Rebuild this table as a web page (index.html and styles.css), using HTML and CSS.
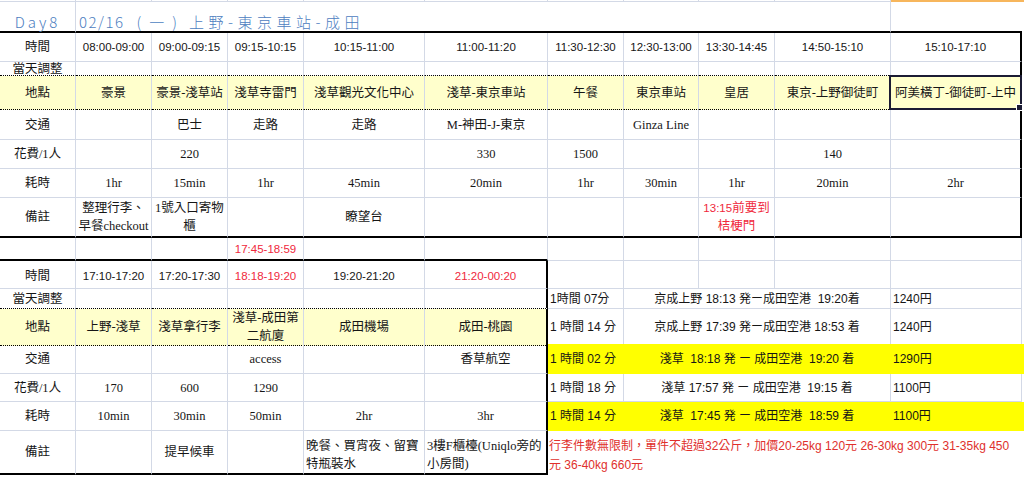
FILE: index.html
```html
<!DOCTYPE html>
<html lang="zh-Hant">
<head>
<meta charset="utf-8">
<title>Day8 行程</title>
<link rel="stylesheet" href="styles.css">
</head>
<body>
<div class="sheet">
  <div class="row r-top">
    <div class="c"></div><div class="c"></div><div class="c"></div><div class="c"></div><div class="c"></div><div class="c"></div><div class="c"></div><div class="c"></div><div class="c"></div><div class="c"></div><div class="c hdr"></div><div class="c hdr x"></div>
  </div>
  <div class="row r-title">
    <div class="c bt title">Day8</div>
    <div class="c bt title tl span9"><span class="t1">02/16</span><span class="t2">(一)</span><span class="t3">上野-東京車站-成田</span></div>
    <div class="c bt noright"></div>
    <div class="c x"></div>
  </div>
  <div class="row r-29">
    <div class="c">時間</div>
    <div class="c s">08:00-09:00</div>
    <div class="c s">09:00-09:15</div>
    <div class="c s">09:15-10:15</div>
    <div class="c s">10:15-11:00</div>
    <div class="c s">11:00-11:20</div>
    <div class="c s">11:30-12:30</div>
    <div class="c s">12:30-13:00</div>
    <div class="c s">13:30-14:45</div>
    <div class="c s">14:50-15:10</div>
    <div class="c s rt">15:10-17:10</div>
    <div class="c x"></div>
  </div>
  <div class="row r-14">
    <div class="c bd adj">當天調整</div>
    <div class="c bd"></div><div class="c bd"></div><div class="c bd"></div><div class="c bd"></div><div class="c bd"></div><div class="c bd"></div><div class="c bd"></div><div class="c bd"></div><div class="c bd"></div>
    <div class="c bd rt"></div>
    <div class="c x"></div>
  </div>
  <div class="row r-34">
    <div class="c lt bd">地點</div>
    <div class="c lt bd">豪景</div>
    <div class="c lt bd">豪景-淺草站</div>
    <div class="c lt bd">淺草寺雷門</div>
    <div class="c lt bd">淺草觀光文化中心</div>
    <div class="c lt bd">淺草-東京車站</div>
    <div class="c lt bd">午餐</div>
    <div class="c lt bd">東京車站</div>
    <div class="c lt bd">皇居</div>
    <div class="c lt bd">東京-上野御徒町</div>
    <div class="c lt bd rt sel">阿美橫丁-御徒町-上中<div class="selbox"><div class="handle"></div></div></div>
    <div class="c x"></div>
  </div>
  <div class="row r-30">
    <div class="c">交通</div>
    <div class="c"></div>
    <div class="c">巴士</div>
    <div class="c">走路</div>
    <div class="c">走路</div>
    <div class="c">M-神田-J-東京</div>
    <div class="c"></div>
    <div class="c">Ginza Line</div>
    <div class="c"></div>
    <div class="c"></div>
    <div class="c rt"></div>
    <div class="c x"></div>
  </div>
  <div class="row r-29">
    <div class="c">花費/1人</div>
    <div class="c"></div>
    <div class="c">220</div>
    <div class="c"></div>
    <div class="c"></div>
    <div class="c">330</div>
    <div class="c">1500</div>
    <div class="c"></div>
    <div class="c"></div>
    <div class="c">140</div>
    <div class="c rt"></div>
    <div class="c x"></div>
  </div>
  <div class="row r-29">
    <div class="c">耗時</div>
    <div class="c">1hr</div>
    <div class="c">15min</div>
    <div class="c">1hr</div>
    <div class="c">45min</div>
    <div class="c">20min</div>
    <div class="c">1hr</div>
    <div class="c">30min</div>
    <div class="c">1hr</div>
    <div class="c">20min</div>
    <div class="c rt">2hr</div>
    <div class="c x"></div>
  </div>
  <div class="row r-40">
    <div class="c bt">備註</div>
    <div class="c bt"><span class="t">整理行李、<br>早餐checkout</span></div>
    <div class="c bt"><span class="t">1號入口寄物<br>櫃</span></div>
    <div class="c bt"></div>
    <div class="c bt">瞭望台</div>
    <div class="c bt"></div>
    <div class="c bt"></div>
    <div class="c bt"></div>
    <div class="c bt red"><span class="t"><span class="s">13:15</span>前要到<br>桔梗門</span></div>
    <div class="c bt"></div>
    <div class="c bt rt"></div>
    <div class="c x"></div>
  </div>
  <div class="row r-23">
    <div class="c bt"></div>
    <div class="c bt"></div>
    <div class="c bt"></div>
    <div class="c bt s red">17:45-18:59</div>
    <div class="c bt"></div>
    <div class="c bt"></div>
    <div class="c"></div><div class="c"></div><div class="c"></div><div class="c"></div><div class="c"></div>
    <div class="c x"></div>
  </div>
  <div class="row r-28">
    <div class="c lower">時間</div>
    <div class="c s lower">17:10-17:20</div>
    <div class="c s lower">17:20-17:30</div>
    <div class="c s red lower">18:18-19:20</div>
    <div class="c s lower">19:20-21:20</div>
    <div class="c s red rt lower">21:20-00:20</div>
    <div class="c"></div><div class="c"></div><div class="c"></div><div class="c"></div><div class="c"></div>
    <div class="c x"></div>
  </div>
  <div class="row r-20">
    <div class="c bd">當天調整</div>
    <div class="c bd"></div><div class="c bd"></div><div class="c bd"></div><div class="c bd"></div>
    <div class="c bd rt"></div>
    <div class="c j l">1時間 07分</div>
    <div class="c j span3">京成上野 18:13 発ー成田空港&nbsp; 19:20着</div>
    <div class="c j l">1240円</div>
    <div class="c x"></div>
  </div>
  <div class="row r-35">
    <div class="c lt bd">地點</div>
    <div class="c lt bd">上野-淺草</div>
    <div class="c lt bd">淺草拿行李</div>
    <div class="c lt bd"><span class="t">淺草-成田第<br>二航廈</span></div>
    <div class="c lt bd">成田機場</div>
    <div class="c lt bd rt">成田-桃園</div>
    <div class="c j l">1 時間 14 分</div>
    <div class="c j span3">京成上野 17:39 発ー成田空港 18:53 着</div>
    <div class="c j l">1240円</div>
    <div class="c x"></div>
  </div>
  <div class="row r-30">
    <div class="c">交通</div>
    <div class="c"></div>
    <div class="c"></div>
    <div class="c">access</div>
    <div class="c"></div>
    <div class="c rt">香草航空</div>
    <div class="c j l yl">1 時間 02 分</div>
    <div class="c j span3 yl">淺草&nbsp; 18:18 発 ー 成田空港&nbsp; 19:20 着</div>
    <div class="c j l yl">1290円</div>
    <div class="c x yl"></div>
  </div>
  <div class="row r-28">
    <div class="c">花費/1人</div>
    <div class="c">170</div>
    <div class="c">600</div>
    <div class="c">1290</div>
    <div class="c"></div>
    <div class="c rt"></div>
    <div class="c j l">1 時間 18 分</div>
    <div class="c j span3">淺草 17:57 発 ー 成田空港&nbsp; 19:15 着</div>
    <div class="c j l">1100円</div>
    <div class="c x"></div>
  </div>
  <div class="row r-29">
    <div class="c">耗時</div>
    <div class="c">10min</div>
    <div class="c">30min</div>
    <div class="c">50min</div>
    <div class="c">2hr</div>
    <div class="c rt">3hr</div>
    <div class="c j l yl">1 時間 14 分</div>
    <div class="c j span3 yl">淺草&nbsp; 17:45 発 ー 成田空港&nbsp; 18:59 着</div>
    <div class="c j l yl">1100円</div>
    <div class="c x yl"></div>
  </div>
  <div class="row r-44">
    <div class="c bt">備註</div>
    <div class="c bt"></div>
    <div class="c bt">提早候車</div>
    <div class="c bt"></div>
    <div class="c bt l low"><span class="t">晚餐、買宵夜、留寶<br>特瓶裝水</span></div>
    <div class="c bt rt l low"><span class="t">3樓F櫃檯(Uniqlo旁的<br>小房間)</span></div>
    <div class="c note span6"><span class="t">行李件數無限制，單件不超過32公斤，加價20-25kg 120元 26-30kg 300元 31-35kg 450<br>元 36-40kg 660元</span></div>
  </div>
</div>
</body>
</html>
```

FILE: styles.css
```css
html, body {
  margin: 0;
  padding: 0;
  background: #ffffff;
}

body {
  width: 1024px;
  height: 477px;
  overflow: hidden;
  font-family: "Liberation Serif", "Noto Sans CJK TC", serif;
  font-size: 12.5px;
  color: #161616;
}

.sheet {
  display: flex;
  flex-direction: column;
}

.row {
  display: grid;
  grid-template-columns: 76px 76px 76px 76px 121px 123px 76px 75px 76px 116px 131px 2px;
}

.r-top { height: 2px; }
.r-title { height: 31px; }
.r-14 { height: 14px; }
.r-20 { height: 20px; }
.r-23 { height: 23px; }
.r-28 { height: 28px; }
.r-29 { height: 29px; }
.r-30 { height: 30px; }
.r-34 { height: 34px; }
.r-35 { height: 35px; }
.r-40 { height: 40px; }
.r-44 { height: 44px; }

.c {
  box-sizing: border-box;
  min-width: 0;
  border-right: 1px solid #d3d9e6;
  border-bottom: 1px solid #d3d9e6;
  display: flex;
  align-items: center;
  justify-content: center;
  text-align: center;
  white-space: nowrap;
  line-height: 18px;
}

.t { display: block; }

.x { border-right: none; border-bottom: none; }
.noright { border-right: none; }
.hdr { background: #f7b65c; border-color: #f7b65c; }

.bt { border-bottom: 2px solid #000; }
.rt { border-right: 2px solid #000; }
.bd { border-bottom: 1px dotted #000; }

.lt { background: #ffffcc; }
.yl { background: #ffff00; border-color: #ffff00; }

.span9 { grid-column: span 9; }
.span3 { grid-column: span 3; }
.span6 { grid-column: span 6; border-right: none; border-bottom: none; }

.s {
  font-family: "Liberation Sans", "Noto Sans CJK TC", sans-serif;
  font-size: 11.5px;
}

.j {
  font-family: "Liberation Sans", "Noto Sans CJK TC", sans-serif;
  font-size: 12px;
}

.red { color: #f0283c; }

.l {
  justify-content: flex-start;
  text-align: left;
  padding-left: 2px;
}

.lower { padding-top: 3px; }

.low { align-items: flex-start; padding-top: 6px; }

.adj {
  line-height: 14px;
  align-items: flex-start;
  overflow: hidden;
}

.title {
  color: #4d80bf;
  font-family: "Noto Sans CJK TC", "DejaVu Sans", sans-serif;
  font-weight: 300;
  font-size: 15px;
  align-items: flex-end;
  padding-bottom: 0;
  letter-spacing: 3px;
}

.tl {
  justify-content: flex-start;
  padding-left: 3px;
}

.t1 { letter-spacing: 1.5px; }
.t2 { letter-spacing: 8px; margin-left: 12px; }
.t3 { letter-spacing: 4.5px; margin-left: 4px; }

.note {
  color: #e0302c;
  font-family: "Liberation Sans", "Noto Sans CJK TC", sans-serif;
  font-size: 12px;
  justify-content: flex-start;
  text-align: left;
  padding-left: 1px;
  padding-top: 5px;
  line-height: 19px;
  overflow: hidden;
}

.sel { position: relative; }

.selbox {
  position: absolute;
  left: -2px;
  top: -1px;
  right: -2px;
  bottom: -1px;
  border: 2px solid #1b1b33;
  pointer-events: none;
}

.handle {
  position: absolute;
  right: -3px;
  bottom: -3px;
  width: 5px;
  height: 5px;
  background: #1b1b33;
  border: 1px solid #ffffff;
}
```
